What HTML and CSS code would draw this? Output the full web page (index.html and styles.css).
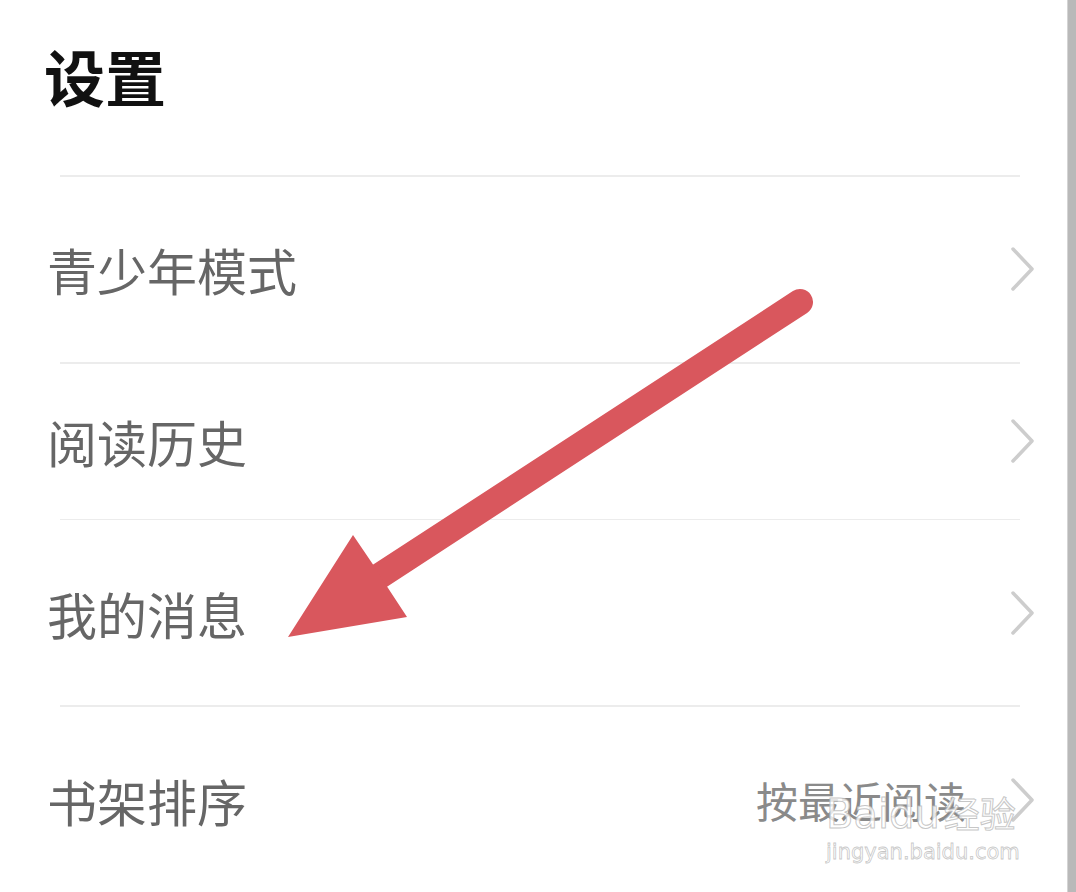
FILE: index.html
```html
<!DOCTYPE html>
<html lang="zh-CN">
<head>
<meta charset="utf-8">
<title>设置</title>
<link rel="stylesheet" href="styles.css">
</head>
<body>
<div class="screen">
  <main class="page">
    <header class="header"><h1 class="title">设置</h1></header>
    <div class="divider"></div>
    <div class="row tall">
      <span class="label">青少年模式</span>
      <span class="chev"><svg width="26" height="46" viewBox="0 0 26 46"><path d="M3 3 L22 23 L3 43" fill="none" stroke="#cdcdcd" stroke-width="3.5" stroke-linecap="round" stroke-linejoin="round"/></svg></span>
    </div>
    <div class="divider"></div>
    <div class="row short">
      <span class="label">阅读历史</span>
      <span class="chev"><svg width="26" height="46" viewBox="0 0 26 46"><path d="M3 3 L22 23 L3 43" fill="none" stroke="#cdcdcd" stroke-width="3.5" stroke-linecap="round" stroke-linejoin="round"/></svg></span>
    </div>
    <div class="divider"></div>
    <div class="row tall">
      <span class="label">我的消息</span>
      <span class="chev"><svg width="26" height="46" viewBox="0 0 26 46"><path d="M3 3 L22 23 L3 43" fill="none" stroke="#cdcdcd" stroke-width="3.5" stroke-linecap="round" stroke-linejoin="round"/></svg></span>
    </div>
    <div class="divider"></div>
    <div class="row tall">
      <span class="label">书架排序</span>
      <span class="value">按最近阅读</span>
      <span class="chev"><svg width="26" height="46" viewBox="0 0 26 46"><path d="M3 3 L22 23 L3 43" fill="none" stroke="#cdcdcd" stroke-width="3.5" stroke-linecap="round" stroke-linejoin="round"/></svg></span>
    </div>
  </main>
  <div class="scrollbar"></div>

  <svg class="arrow" width="1076" height="892" viewBox="0 0 1076 892">
    <line x1="800" y1="302" x2="378" y2="577" stroke="#d9575d" stroke-width="26" stroke-linecap="round"/>
    <polygon points="288,637 353,535 372,563 388,588 407,617" fill="#d9575d"/>
  </svg>

  <div class="watermark">
    <div class="wm-top">Baidu<span class="wm-cn">经验</span></div>
    <div class="wm-url">jingyan.baidu.com</div>
  </div>
</div>
</body>
</html>
```

FILE: styles.css
```css
html, body {
  margin: 0;
  padding: 0;
  background: #ffffff;
}

body {
  font-family: "Noto Sans CJK SC", "Noto Sans", sans-serif;
  overflow: hidden;
}

.screen {
  position: relative;
  width: 1076px;
  height: 892px;
  display: flex;
  overflow: hidden;
}

.page {
  flex: 1;
  display: flex;
  flex-direction: column;
  background: #ffffff;
}

.scrollbar {
  width: 8px;
  background: #b9b9b9;
  border-left: 1px solid #d4d4d4;
}

.header {
  height: 176px;
  padding-left: 44px;
}

.title {
  margin: 0;
  padding-top: 32px;
  font-size: 61px;
  font-weight: 700;
  line-height: 88px;
  color: #111111;
  letter-spacing: 0;
}

.divider {
  height: 2px;
  margin: 0 47px 0 60px;
  background: #ececec;
}

.row {
  display: flex;
  align-items: center;
  padding-left: 47px;
  padding-right: 31px;
}

.row.tall {
  height: 186px;
}

.row.short {
  height: 156px;
}

.label {
  flex: 1;
  font-size: 50px;
  line-height: 60px;
  color: #666666;
}

.value {
  font-size: 42px;
  line-height: 50px;
  color: #8a8a8a;
  margin-right: 44px;
}

.chev {
  display: flex;
  align-items: center;
}

.arrow {
  position: absolute;
  left: 0;
  top: 0;
  pointer-events: none;
}

.watermark {
  position: absolute;
  left: 826px;
  top: 788px;
  font-family: "DejaVu Sans", sans-serif;
  color: rgba(255, 255, 255, 0.8);
  -webkit-text-stroke: 1px rgba(180, 180, 180, 0.75);
  pointer-events: none;
}

.wm-top {
  font-size: 40px;
  line-height: 48px;
  letter-spacing: 0;
}

.wm-cn {
  font-family: "Noto Sans CJK SC", sans-serif;
  font-size: 36px;
  margin-left: 4px;
}

.wm-url {
  font-size: 21px;
  line-height: 28px;
  -webkit-text-stroke: 0.8px rgba(180, 180, 180, 0.75);
}
```
